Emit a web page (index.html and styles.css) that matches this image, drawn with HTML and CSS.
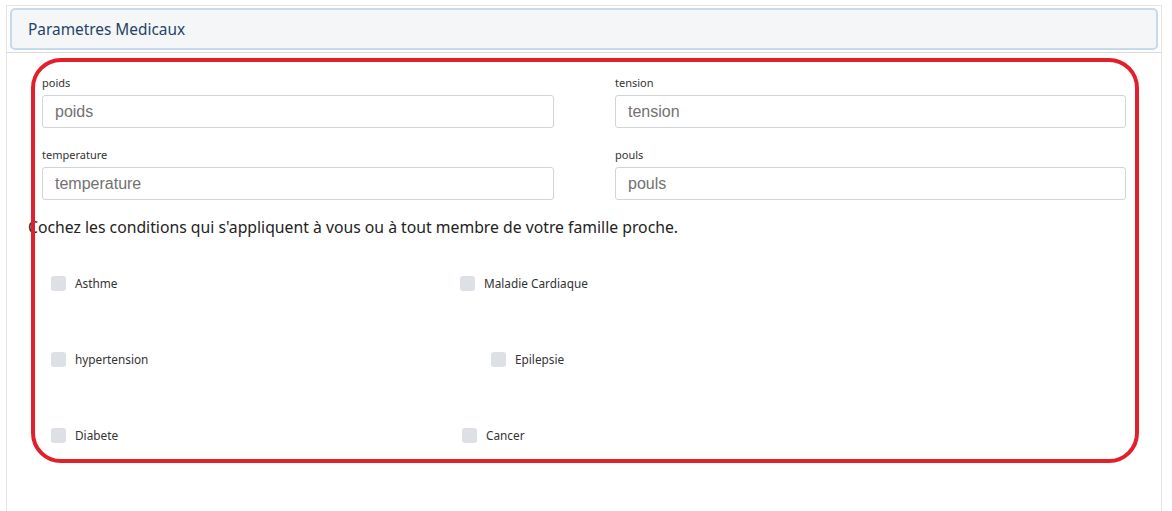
FILE: index.html
```html
<!DOCTYPE html>
<html lang="fr">
<head>
<meta charset="utf-8">
<title>Parametres Medicaux</title>
<link rel="stylesheet" href="styles.css">
</head>
<body>
<div class="card">
  <div class="card-head">
    <div class="head-box">Parametres Medicaux</div>
  </div>
  <div class="card-body">
    <div class="annot"></div>
    <div class="fields">
      <div class="field">
        <label class="lbl">poids</label>
        <input class="inp" type="text" placeholder="poids">
      </div>
      <div class="field">
        <label class="lbl">tension</label>
        <input class="inp" type="text" placeholder="tension">
      </div>
      <div class="field">
        <label class="lbl">temperature</label>
        <input class="inp" type="text" placeholder="temperature">
      </div>
      <div class="field">
        <label class="lbl">pouls</label>
        <input class="inp" type="text" placeholder="pouls">
      </div>
    </div>
    <p class="intro">Cochez les conditions qui s'appliquent à vous ou à tout membre de votre famille proche.</p>
    <div class="checks">
      <div class="check-row">
        <label class="chk col-a"><span class="box"></span>Asthme</label>
        <label class="chk"><span class="box"></span>Maladie Cardiaque</label>
      </div>
      <div class="check-row">
        <label class="chk col-a"><span class="box"></span>hypertension</label>
        <label class="chk"><span class="box"></span>Epilepsie</label>
      </div>
      <div class="check-row">
        <label class="chk col-a"><span class="box"></span>Diabete</label>
        <label class="chk"><span class="box"></span>Cancer</label>
      </div>
    </div>
  </div>
</div>
</body>
</html>
```
FILE: styles.css
```css
html, body {
  margin: 0;
  padding: 0;
  background: #ffffff;
  height: 100%;
  overflow: hidden;
}
body {
  font-family: "Noto Sans", "Open Sans", sans-serif;
  color: #212529;
}
.card {
  margin: 5px 0 0 6px;
  width: 1154px;
  min-height: 520px;
  border: 1px solid #e4e4e4;
  border-bottom: none;
  box-sizing: content-box;
  position: relative;
}
.card-head {
  padding: 2px 3px 2px 3px;
  border-bottom: 1px solid #dcdcdc;
}
.head-box {
  height: 38px;
  border: 2px solid #c6daee;
  border-radius: 5px;
  background: #f5f6f8;
  padding-left: 16px;
  display: flex;
  align-items: center;
  font-size: 15.4px;
  color: #244466;
}
.card-body {
  padding: 22px 35px 0 35px;
  position: relative;
}
.annot {
  position: absolute;
  left: 24px;
  top: 5px;
  width: 1100px;
  height: 397px;
  border: 4px solid #e2202b;
  border-radius: 30px;
  pointer-events: none;
}
.fields {
  display: grid;
  grid-template-columns: 512px 511px;
  column-gap: 61px;
  row-gap: 19px;
}
.field {
  display: flex;
  flex-direction: column;
}
.lbl {
  font-size: 11px;
  line-height: 16px;
  color: #333;
  margin-bottom: 4px;
}
.inp {
  height: 33px;
  box-sizing: border-box;
  border: 1px solid #cfd4d9;
  border-radius: 3px;
  padding: 0 12px;
  font-family: "Liberation Sans", Arial, sans-serif;
  font-size: 16px;
  color: #495057;
  background: #fff;
  outline: none;
}
.inp::placeholder {
  color: #727272;
}
.intro {
  margin: 16px 0 0 -14px;
  font-size: 15.75px;
  line-height: 22px;
  color: #222;
  white-space: nowrap;
}
.checks {
  display: flex;
  flex-direction: column;
  margin-top: 37px;
  row-gap: 60px;
}
.check-row {
  display: flex;
  align-items: center;
  height: 16px;
}
.chk {
  display: flex;
  align-items: center;
  font-size: 11.8px;
  color: #333;
  gap: 9px;
}
.box {
  width: 15px;
  height: 15px;
  border-radius: 3px;
  background: #dde0e5;
  display: inline-block;
}
.col-a {
  margin-left: 9px;
}
.check-row .col-a { width: 409px; }
.check-row:nth-child(2) .col-a { width: 440px; }
.check-row:nth-child(3) .col-a { width: 411px; }
```
